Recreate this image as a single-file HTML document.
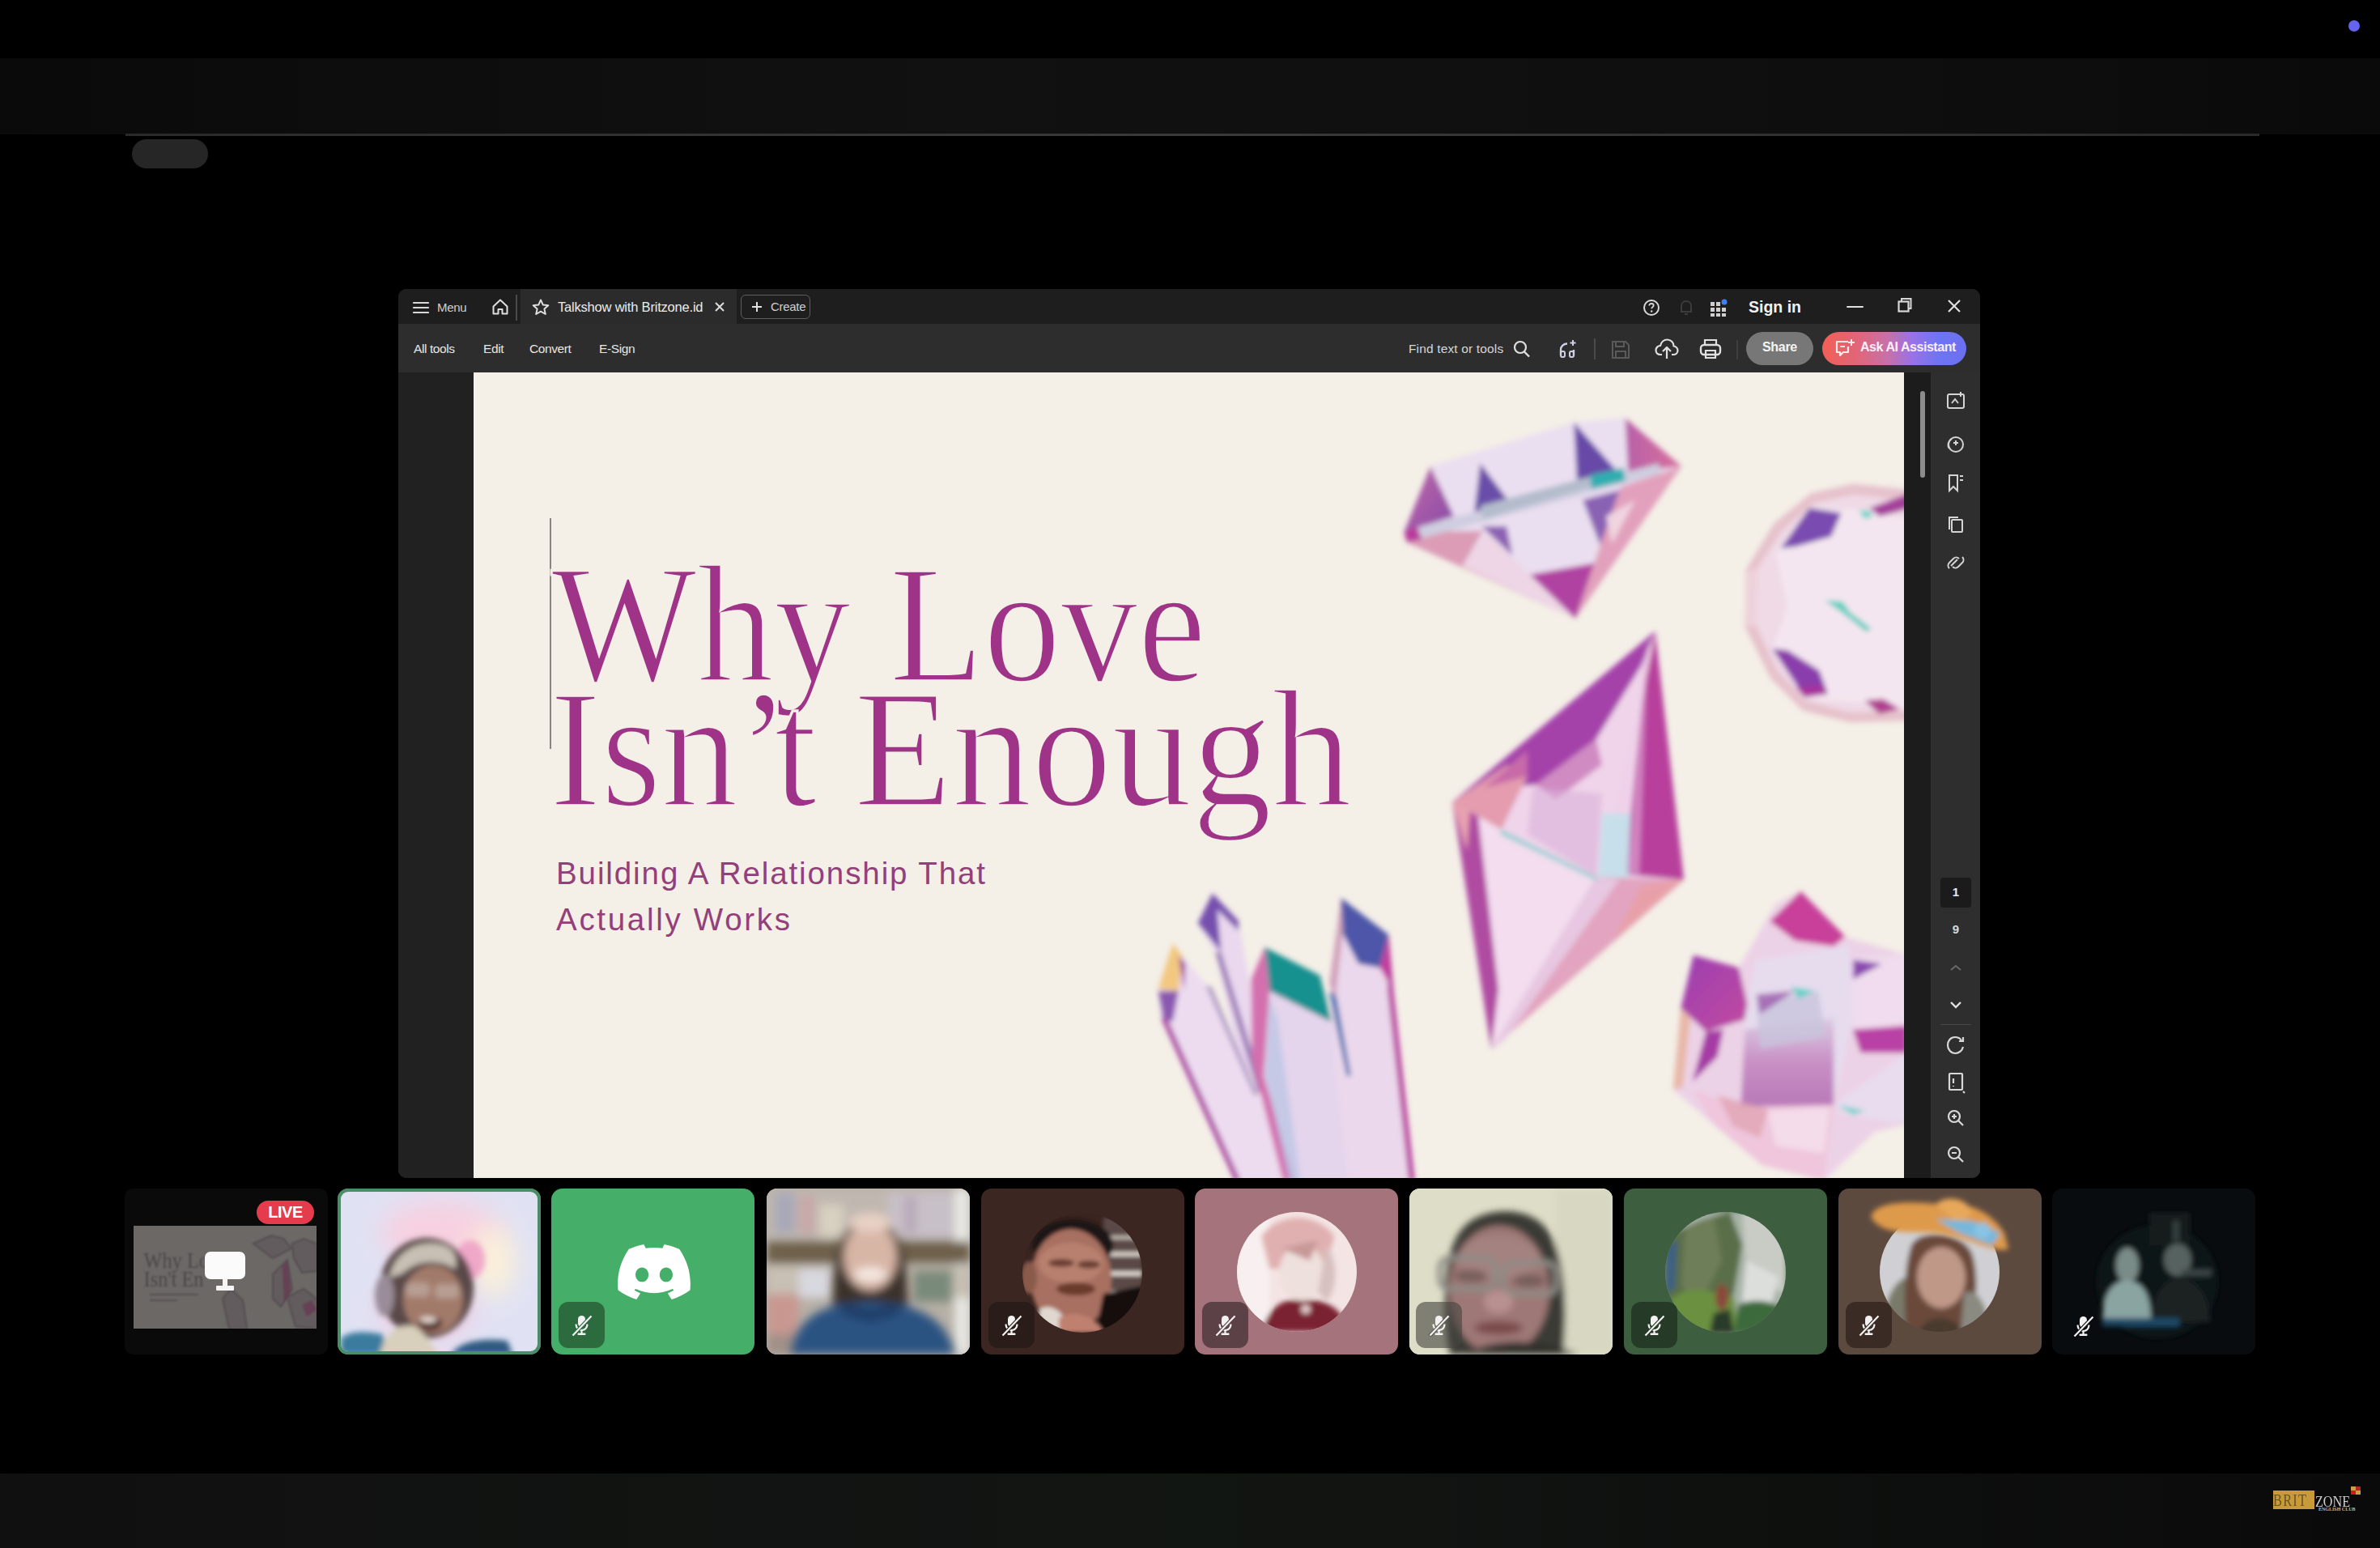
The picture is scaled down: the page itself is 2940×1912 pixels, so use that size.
<!DOCTYPE html>
<html><head><meta charset="utf-8">
<style>
*{margin:0;padding:0;box-sizing:border-box}
html,body{width:2940px;height:1912px;overflow:hidden;background:#000;font-family:"Liberation Sans",sans-serif}
.abs{position:absolute}
#topband{left:0;top:72px;width:2940px;height:94px;background:linear-gradient(90deg,#0a0a0a 0%,#111 40%,#0e0e0e 80%,#0a0a0a 100%)}
#topline{left:155px;top:165px;width:2636px;height:3px;background:linear-gradient(90deg,#2a2a2a,#3a3a3a 50%,#2a2a2a)}
#pill{left:163px;top:172px;width:94px;height:36px;border-radius:18px;background:#262626}
#dot{left:2901px;top:25px;width:14px;height:14px;border-radius:50%;background:#6464ee}
#botband{left:0;top:1820px;width:2940px;height:92px;background:linear-gradient(90deg,#101010,#121613 50%,#0a0a0a)}
#win{left:492px;top:357px;width:1954px;height:1098px;border-radius:10px;background:#2c2c2c;overflow:hidden}
#titlebar{left:0;top:0;width:1954px;height:43px;background:#1e1e1e}
#toolbar{left:0;top:43px;width:1954px;height:60px;background:#2d2d2d}
#lside{left:0;top:103px;width:93px;height:995px;background:#212121}
#slide{left:93px;top:103px;width:1767px;height:995px;background:#f4efe7;overflow:hidden}
#scrollstrip{left:1860px;top:103px;width:33px;height:995px;background:#1c1c1c}
#rpanel{left:1893px;top:103px;width:61px;height:995px;background:#2e2e2e}
.ttl{font-family:"Liberation Serif",serif;font-size:207px;line-height:207px;color:#9e3387;white-space:nowrap;transform-origin:0 0;transform:scaleX(0.92);-webkit-text-stroke:3.5px #f4efe7}
.sub{font-size:38.5px;line-height:40px;color:#93407a;letter-spacing:1.9px;white-space:nowrap}
.tb{color:#e6e6e6;font-size:16px;position:absolute;white-space:nowrap}
</style></head>
<body>
<div id="topband" class="abs"></div>
<div id="topline" class="abs"></div>
<div id="pill" class="abs"></div>
<div id="dot" class="abs"></div>
<div id="botband" class="abs"></div>
<div class="abs" style="left:2808px;top:1841px;width:51px;height:23px;background:#c89a3a"></div>
<div class="abs" style="left:2808px;top:1843px;width:51px;font-family:'Liberation Serif',serif;font-size:20px;line-height:20px;color:#6a5420;letter-spacing:1.5px;transform:scaleX(0.82);transform-origin:0 0;white-space:nowrap">BRIT</div>
<div class="abs" style="left:2860px;top:1845px;font-family:'Liberation Serif',serif;font-size:19px;line-height:19px;color:#d0d0d0;white-space:nowrap;transform:scaleX(0.85);transform-origin:0 0">ZONE</div>
<div class="abs" style="left:2864px;top:1861px;font-family:'Liberation Serif',serif;font-size:6px;line-height:6px;font-weight:bold;color:#bbb;white-space:nowrap">ENGLISH CLUB</div>
<div class="abs" style="left:2904px;top:1836px;width:6px;height:5px;background:#c8a040"></div>
<div class="abs" style="left:2910px;top:1836px;width:6px;height:5px;background:#c02020"></div>
<div class="abs" style="left:2904px;top:1841px;width:6px;height:5px;background:#c02020"></div>
<div class="abs" style="left:2910px;top:1841px;width:6px;height:5px;background:#c8a040"></div>


<div id="win" class="abs">
  <div id="titlebar" class="abs">
    <div class="abs" style="left:151px;top:0;width:267px;height:43px;background:#2b2b2b"></div>
    <div class="abs" style="left:145px;top:7px;width:1.5px;height:32px;background:#4a4a4a"></div>
    <svg class="abs" style="left:18px;top:15px" width="20" height="16" viewBox="0 0 20 16"><path d="M1 2H19M1 8H19M1 14H19" stroke="#d8d8d8" stroke-width="2.2" stroke-linecap="round"/></svg>
    <div class="tb" style="left:48px;top:14px;font-size:15px;color:#cfcfcf;letter-spacing:-0.3px">Menu</div>
    <svg class="abs" style="left:115px;top:11px" width="22" height="22" viewBox="0 0 22 22"><path d="M2.5 10.5L11 2.5L19.5 10.5V19.5H13.5V14H8.5V19.5H2.5Z" fill="none" stroke="#dedede" stroke-width="2" stroke-linejoin="round"/></svg>
    <svg class="abs" style="left:165px;top:12px" width="22" height="21" viewBox="0 0 22 21"><path d="M11 1.5L13.8 7.6L20.3 8.2L15.4 12.6L16.8 19L11 15.7L5.2 19L6.6 12.6L1.7 8.2L8.2 7.6Z" fill="none" stroke="#dedede" stroke-width="2" stroke-linejoin="round"/></svg>
    <div class="tb" style="left:197px;top:13px;font-size:16.5px;color:#ececec;letter-spacing:-0.2px">Talkshow with Britzone.id</div>
    <svg class="abs" style="left:391px;top:16px" width="12" height="12" viewBox="0 0 12 12"><path d="M1 1L11 11M11 1L1 11" stroke="#dcdcdc" stroke-width="2"/></svg>
    <div class="abs" style="left:423px;top:7px;width:86px;height:30px;border:1.5px solid #5e5e5e;border-radius:6px"></div>
    <svg class="abs" style="left:437px;top:16px" width="12" height="12" viewBox="0 0 12 12"><path d="M6 0V12M0 6H12" stroke="#e0e0e0" stroke-width="2"/></svg>
    <div class="tb" style="left:460px;top:13px;font-size:15px;color:#cfcfcf;letter-spacing:-0.3px">Create</div>

    <svg class="abs" style="left:1537px;top:12px" width="22" height="22" viewBox="0 0 22 22"><circle cx="11" cy="11" r="9" fill="none" stroke="#d8d8d8" stroke-width="2"/><path d="M8.3 8.5C8.3 6.9 9.5 6 11 6C12.6 6 13.7 7 13.7 8.3C13.7 10 11.2 10.2 11.2 12.3" fill="none" stroke="#d8d8d8" stroke-width="1.8"/><circle cx="11.2" cy="15.5" r="1.2" fill="#d8d8d8"/></svg>
    <svg class="abs" style="left:1581px;top:12px" width="20" height="22" viewBox="0 0 20 22"><path d="M4 16V9C4 5.5 6.5 3 10 3C13.5 3 16 5.5 16 9V16H4ZM8 19H12" fill="none" stroke="#3c3c3c" stroke-width="2"/></svg>
    <svg class="abs" style="left:1619px;top:11px" width="24" height="24" viewBox="0 0 24 24"><g fill="#cfcfcf"><rect x="2" y="5" width="5" height="5"/><rect x="9" y="5" width="5" height="5"/><rect x="2" y="12" width="5" height="5"/><rect x="9" y="12" width="5" height="5"/><rect x="16" y="12" width="5" height="5"/><rect x="2" y="19" width="5" height="4"/><rect x="9" y="19" width="5" height="4"/><rect x="16" y="19" width="5" height="4"/></g><circle cx="19" cy="5" r="3.5" fill="#3b82f6"/></svg>
    <div class="tb" style="left:1668px;top:11px;font-size:19.5px;font-weight:bold;color:#f2f2f2">Sign in</div>
    <div class="abs" style="left:1789px;top:20.5px;width:21px;height:2.2px;background:#e0e0e0;border-radius:1px"></div>
    <svg class="abs" style="left:1852px;top:10px" width="18" height="20" viewBox="0 0 18 20"><rect x="1.5" y="5.5" width="12" height="12" fill="none" stroke="#d8d8d8" stroke-width="2.2"/><path d="M5 5V2H16.5V14H14" fill="none" stroke="#d8d8d8" stroke-width="2"/></svg>
    <svg class="abs" style="left:1914px;top:13px" width="16" height="16" viewBox="0 0 16 16"><path d="M1 1L15 15M15 1L1 15" stroke="#e0e0e0" stroke-width="2.2"/></svg>
  </div>
  <div id="toolbar" class="abs">
    <div class="tb" style="left:19px;top:22px;font-size:15.5px;letter-spacing:-0.4px">All tools</div>
    <div class="tb" style="left:105px;top:22px;font-size:15.5px;letter-spacing:-0.4px">Edit</div>
    <div class="tb" style="left:162px;top:22px;font-size:15.5px;letter-spacing:-0.4px">Convert</div>
    <div class="tb" style="left:248px;top:22px;font-size:15.5px;letter-spacing:-0.4px">E-Sign</div>
    <div class="tb" style="left:1248px;top:22px;font-size:15.5px;letter-spacing:0.15px;color:#d6d6d6">Find text or tools</div>
    <svg class="abs" style="left:1377px;top:19px" width="22" height="24" viewBox="0 0 22 24"><circle cx="9" cy="10" r="7" fill="none" stroke="#e0e0e0" stroke-width="2.2"/><path d="M14 15.5L20 21.5" stroke="#e0e0e0" stroke-width="2.4"/></svg>
    <svg class="abs" style="left:1433px;top:18px" width="24" height="26" viewBox="0 0 24 26"><path d="M3 21V14C3 9.5 6.5 6.5 11 6.5M19 21V14" fill="none" stroke="#cfcfe6" stroke-width="2.4"/><rect x="3" y="16" width="5" height="7" rx="2" fill="none" stroke="#cfcfe6" stroke-width="2"/><rect x="14" y="16" width="5" height="7" rx="2" fill="none" stroke="#cfcfe6" stroke-width="2"/><path d="M18 2V9M14.5 5.5H21.5" stroke="#cfcfe6" stroke-width="2"/></svg>
    <div class="abs" style="left:1477px;top:18px;width:1.5px;height:26px;background:#4a4a4a"></div>
    <svg class="abs" style="left:1498px;top:20px" width="24" height="24" viewBox="0 0 24 24"><path d="M2 2H18L22 6V22H2Z M6 2V8H16V2 M6 22V14H18V22" fill="none" stroke="#5a5a5a" stroke-width="2"/></svg>
    <svg class="abs" style="left:1552px;top:17px" width="30" height="28" viewBox="0 0 30 28"><path d="M9 21H7C3.5 21 1.5 18.5 1.5 15.5C1.5 12.5 4 10 7 10C8 5.5 11.5 2.5 15.5 2.5C20 2.5 23.5 6 23.5 10.5C26.5 11 28.5 13.5 28.5 16C28.5 19 26 21 23 21H21M15 26V12M10 17L15 12L20 17" fill="none" stroke="#e0e0e0" stroke-width="2.2" stroke-linejoin="round"/></svg>
    <svg class="abs" style="left:1607px;top:18px" width="28" height="26" viewBox="0 0 28 26"><rect x="2" y="8" width="24" height="12" rx="4" fill="none" stroke="#e0e0e0" stroke-width="2.4"/><path d="M7 8V2H21V8M8 15H20V24H8Z" fill="none" stroke="#e0e0e0" stroke-width="2.2"/></svg>
    <div class="abs" style="left:1653px;top:20px;width:1.5px;height:24px;background:#3e3e3e"></div>
    <div class="abs" style="left:1665px;top:10px;width:83px;height:41px;border-radius:21px;background:#777"></div>
    <div class="tb" style="left:1665px;top:20px;width:83px;text-align:center;font-size:16px;font-weight:bold;color:#f4f4f4;letter-spacing:-0.3px">Share</div>
    <div class="abs" style="left:1759px;top:10px;width:178px;height:41px;border-radius:21px;background:linear-gradient(90deg,#f25f55 0%,#e0667a 25%,#c870a8 45%,#9a72e6 62%,#6f74f4 80%,#6a70f0 100%)"></div>
    <svg class="abs" style="left:1774px;top:18px" width="26" height="24" viewBox="0 0 26 24"><path d="M17 4H3V17H7V21L11 17H17V10" fill="none" stroke="#ffe8e8" stroke-width="2.2" stroke-linejoin="round"/><path d="M21 1V9M17 5H25" stroke="#ffe8e8" stroke-width="2"/><path d="M7 10H13" stroke="#ffe8e8" stroke-width="2"/></svg>
    <div class="tb" style="left:1806px;top:20px;font-size:16px;font-weight:bold;color:#fbeefa;letter-spacing:-0.45px">Ask AI Assistant</div>
  </div>
  <div id="lside" class="abs"></div>
  <div id="slide" class="abs">
<svg class="abs" style="left:0;top:0" width="1767" height="995" viewBox="585 460 1767 995">
<defs>
<filter id="bl" x="-5%" y="-5%" width="110%" height="110%"><feGaussianBlur stdDeviation="1.6"/></filter>
<filter id="bl3" x="-5%" y="-5%" width="110%" height="110%"><feGaussianBlur stdDeviation="3"/></filter>
<filter id="bl2" x="-10%" y="-10%" width="120%" height="120%"><feGaussianBlur stdDeviation="6"/></filter>
<linearGradient id="dA" x1="0" y1="0" x2="1" y2="1"><stop offset="0" stop-color="#c06aa8"/><stop offset="1" stop-color="#8a4aa8"/></linearGradient>
<linearGradient id="dR" x1="0" y1="0" x2="1" y2="0"><stop offset="0" stop-color="#b860a8"/><stop offset="1" stop-color="#d8709c"/></linearGradient>
<linearGradient id="rkC" x1="0" y1="0" x2="0" y2="1"><stop offset="0" stop-color="#dccce4"/><stop offset="0.5" stop-color="#c890c4"/><stop offset="1" stop-color="#b878b8"/></linearGradient>
<linearGradient id="lav" x1="0" y1="0" x2="1" y2="1"><stop offset="0" stop-color="#ede3f2"/><stop offset="1" stop-color="#e3d3ea"/></linearGradient>
<linearGradient id="pinkbody" x1="0" y1="0" x2="0" y2="1"><stop offset="0" stop-color="#f4dcee"/><stop offset="1" stop-color="#ecc6dc"/></linearGradient>
<linearGradient id="mag1" x1="0" y1="0" x2="1" y2="1"><stop offset="0" stop-color="#9b3fb0"/><stop offset="1" stop-color="#c24aa0"/></linearGradient>
<linearGradient id="salmon" x1="0" y1="0" x2="1" y2="1"><stop offset="0" stop-color="#e6a0b4"/><stop offset="1" stop-color="#d77fae"/></linearGradient>
<linearGradient id="pr1" x1="0" y1="0" x2="1" y2="1"><stop offset="0" stop-color="#a53fae"/><stop offset="0.45" stop-color="#c05aac"/><stop offset="1" stop-color="#e9a2b6"/></linearGradient>
<linearGradient id="pr2" x1="0" y1="0" x2="1" y2="0"><stop offset="0" stop-color="#e8cfe8"/><stop offset="0.5" stop-color="#b64aa6"/><stop offset="1" stop-color="#c4479c"/></linearGradient>
<linearGradient id="pr3" x1="0" y1="0" x2="1" y2="0"><stop offset="0" stop-color="#b24aa4"/><stop offset="0.25" stop-color="#f0d6ee"/><stop offset="1" stop-color="#f2dcf0"/></linearGradient>
<linearGradient id="pr4" x1="0" y1="0" x2="1" y2="1"><stop offset="0" stop-color="#d59ac8"/><stop offset="1" stop-color="#e79ca8"/></linearGradient>
</defs>

<!-- Diamond top: zoom frame 1720,500 scale .18083 -->
<g filter="url(#bl3)"><g transform="translate(1720,500) scale(0.18083)">
  <polygon points="80,870 260,420 1240,120 1590,90 1975,420 1250,1460 100,940" fill="#eadff0"/>
  <polygon points="80,870 260,420 420,760" fill="url(#dA)"/>
  <polygon points="600,400 560,730 820,690" fill="#6a4ea8"/>
  <polygon points="1240,120 1260,510 1550,470" fill="#6848a8"/>
  <polygon points="1590,90 1975,420 1800,440 1610,470" fill="url(#dR)"/>
  <polygon points="100,940 80,870 620,860 480,1100 1250,1460" fill="#dc9cb6"/>
  <polygon points="480,1100 640,870 1250,1460" fill="#eed6e6"/>
  <polygon points="610,830 820,1030 780,830" fill="#8c60b2"/>
  <polygon points="1300,650 1560,580 1420,960" fill="#8a62b4"/>
  <polygon points="940,1160 1390,1080 1250,1460" fill="#b042a2"/>
  <polygon points="1560,560 1975,420 1250,1460 1420,960" fill="#e2a0bc"/>
  <polygon points="1460,760 1660,650 1500,950" fill="#f0d4e0"/>
  <polygon points="150,840 1820,400 1830,470 170,920" fill="#cfcde0"/>
  <polygon points="600,690 1350,490 1360,560 620,780" fill="#b4bccc"/>
  <polygon points="1350,480 1580,430 1590,520 1360,575" fill="#2eaeb0"/>
  <polygon points="80,870 170,830 200,920 100,940" fill="#b83a9c"/>
</g></g>

<!-- Round diamond right: zoom frame 2140,580 scale .20678 -->
<g filter="url(#bl3)"><g transform="translate(2140,580) scale(0.20678)">
  <polygon points="80,600 250,320 470,140 720,85 1060,120 1060,1500 700,1510 420,1440 230,1250 75,940" fill="#e6c2cc"/>
  <polygon points="150,590 300,360 490,200 730,150 1060,190 1060,1440 700,1450 440,1380 270,1200 140,930" fill="#efdae6"/>
  <polygon points="260,500 460,230 800,240 1060,300 1060,1430 760,1390 420,1370 240,1070 330,820" fill="#f4e6f0"/>
  <polygon points="290,470 460,230 650,260 590,400 380,460" fill="#7a4cb0"/>
  <polygon points="240,1070 430,1360 570,1340 520,1200 330,1080" fill="#8a3cac"/>
  <polygon points="380,1300 430,1360 560,1340 540,1290" fill="#a8309c"/>
  <polygon points="820,230 1060,140 1060,230 880,280" fill="#a4409c"/>
  <polygon points="790,1380 880,1460 1000,1430 900,1370" fill="#b04090"/>
  <polygon points="550,780 660,790 700,850 830,950 800,970 650,850" fill="#5ccec0"/>
  <polygon points="760,240 830,250 830,290 780,290" fill="#70d4c8"/>
  <polygon points="80,610 150,590 140,930 75,940" fill="#eed2da"/>
</g></g>

<!-- Pyramid crystal: zoom frame 1780,760 scale .35516 -->
<g filter="url(#bl3)"><g transform="translate(1780,760) scale(0.35516)">
  <polygon points="745,55 40,650 210,745 540,910" fill="#f0d4ea"/>
  <polygon points="745,55 40,650 150,600 330,590 540,430 700,170" fill="#a442aa"/>
  <polygon points="330,590 540,430 560,520 400,640" fill="#c878b8" opacity=".8"/>
  <polygon points="40,650 230,520 300,560 210,745" fill="#e49cae"/>
  <polygon points="150,600 300,470 300,560" fill="#c86aa8"/>
  <polygon points="320,600 560,620 540,910 300,760" fill="#d8b0d8" opacity=".6"/>
  <polygon points="745,55 540,910 845,920" fill="#efd2ea"/>
  <polygon points="745,55 845,920 640,900 700,300" fill="#b8409c"/>
  <polygon points="700,300 720,60 690,900 650,900" fill="#dca0d0" opacity=".7"/>
  <polygon points="560,690 660,690 650,960 545,930" fill="#bfe2ea" opacity=".85"/>
  <polygon points="40,650 210,745 540,910 175,1510" fill="#f3ddef"/>
  <polygon points="40,650 130,700 200,1300 175,1510" fill="#b04ca2"/>
  <polygon points="40,650 100,680 90,820" fill="#e8a2b0"/>
  <polygon points="540,910 845,920 175,1510" fill="#e2a4c0"/>
  <polygon points="540,910 620,920 220,1480 175,1510" fill="#e8cfe8" opacity=".8"/>
  <polygon points="700,940 845,920 600,1130" fill="#e8a0a8"/>
  <polygon points="210,745 540,910 545,925 205,760" fill="#8ccfd0"/>
</g></g>

<!-- Cluster bottom-left: zoom frame 1420,1090 scale .23912 -->
<g filter="url(#bl3)"><g transform="translate(1420,1090) scale(0.23912)">
  <!-- crystal 2 back -->
  <polygon points="250,210 325,55 460,200 470,260 640,1150 460,900 340,360" fill="#ead8ee"/>
  <polygon points="250,210 325,55 460,200 460,250 350,140 370,360" fill="#7650ae"/>
  <polygon points="340,360 370,360 600,1100 560,1080" fill="#9a7ab8"/>
  <!-- crystal 1 -->
  <polygon points="45,550 120,315 300,540 780,1540 450,1540 60,700" fill="#eddcf0"/>
  <polygon points="45,550 120,315 170,380 150,560" fill="#f2c880"/>
  <polygon points="45,560 150,560 120,720 70,700" fill="#8a58b0"/>
  <polygon points="60,700 90,700 470,1540 440,1540" fill="#a83aa0"/>
  <polygon points="150,380 185,420 180,560" fill="#9a3a9a"/>
  <polygon points="290,530 320,540 560,1100 540,1100" fill="#9880b8" opacity=".8"/>
  <!-- crystal 3 teal -->
  <polygon points="525,500 595,335 880,480 940,720 1160,1540 720,1540 530,900" fill="#e4d4ec"/>
  <polygon points="595,335 880,480 940,720 620,560" fill="#13918f"/>
  <polygon points="525,500 595,335 620,560 590,1000 750,1540 690,1540 530,920" fill="#d46fae"/>
  <polygon points="620,600 660,700 780,1540 720,1540 600,1000" fill="#b8c4e4" opacity=".7"/>
  <!-- crystal 4 blue -->
  <polygon points="930,520 990,80 1235,270 1260,560 1370,1540 1030,1540 960,1000" fill="#ebd8ec"/>
  <polygon points="990,80 1235,270 1190,440 1080,420 980,230" fill="#4d56a8"/>
  <polygon points="1190,440 1235,270 1260,560" fill="#c53c9c"/>
  <polygon points="1235,270 1260,560 1370,1540 1340,1540 1230,560" fill="#b8389c"/>
  <polygon points="930,570 960,560 1040,1000 1020,1000" fill="#3e6cb0"/>
  <polygon points="930,520 990,80 1000,240 960,600" fill="#d0a0b8"/>
</g></g>

<!-- Rock cluster bottom-right: zoom frame 2050,1090 scale .239 -->
<g filter="url(#bl3)"><g transform="translate(2050,1090) scale(0.239)">
  <polygon points="70,1070 110,650 175,375 410,440 600,110 730,45 960,280 1280,375 1280,1250 1110,1290 850,1540 530,1460 280,1250" fill="#ecd2e6"/>
  <polygon points="570,200 730,45 960,280 900,330 700,300" fill="#c8409a"/>
  <polygon points="110,650 175,375 410,440 470,700 240,770" fill="url(#mag1)"/>
  <polygon points="170,1030 240,770 330,760 300,900" fill="#a63aa5"/>
  <polygon points="500,400 980,330 1000,700 900,1150 420,1160 440,700" fill="#e6dcee"/>
  <polygon points="440,760 900,700 900,1150 420,1160" fill="url(#rkC)"/>
  <polygon points="500,620 820,560 860,800 520,860" fill="#c8c4dc" opacity=".8"/>
  <polygon points="500,580 700,560 520,680" fill="#9a5aaa" opacity=".8"/>
  <polygon points="990,390 1280,375 1280,750 1000,750" fill="#f0dcee"/>
  <polygon points="1000,400 1150,420 1000,500" fill="#8a4ab0"/>
  <polygon points="1000,760 1280,740 1280,880 1040,880" fill="#b93fa5"/>
  <polygon points="900,1150 1280,880 1280,1250 950,1200" fill="#e8dcee"/>
  <polygon points="170,1070 420,1160 900,1150 850,1540 530,1460 280,1250" fill="#efc6dc"/>
  <polygon points="70,1070 110,650 160,700 120,1060" fill="#e8b8a8"/>
  <polygon points="680,540 800,560 720,600" fill="#5fd0c8"/>
  <polygon points="920,1150 1060,1180 1000,1200" fill="#60d0c8"/>
  <polygon points="300,1100 560,1170 520,1320 380,1260" fill="#e0a4b4" opacity=".8"/>
  <polygon points="560,1180 880,1160 850,1400 600,1360" fill="#f4dcea"/>
</g></g>
</svg>

    <div class="abs" style="left:94px;top:180px;width:2px;height:285px;background:#8a8580"></div>
    <div class="abs ttl" style="left:96px;top:208px">Why Love</div>
    <div class="abs ttl" style="left:94px;top:362px">Isn<span style="margin-right:-0.1em">’</span>t</div>
    <div class="abs ttl" style="left:470px;top:362px;transform:scaleX(0.955)">Enough</div>
    <div class="abs sub" style="left:102px;top:599px">Building A Relationship That</div>
    <div class="abs sub" style="left:102px;top:656px;letter-spacing:2.7px">Actually Works</div>
  </div>
  <div id="scrollstrip" class="abs"><div class="abs" style="left:20px;top:23px;width:6px;height:107px;border-radius:3px;background:#8c8c8c"></div></div>
  <div id="rpanel" class="abs">
    <svg class="abs" style="left:11px;top:24px" width="40" height="700" viewBox="0 0 40 700" fill="none" stroke="#d4d4d4" stroke-width="2">
      <!-- y relative: page 495 -> rel 495-460-24=11 -->
      <rect x="10" y="3" width="20" height="17" rx="2"/><path d="M15 14L19 9L23 14" /><path d="M26 0V6M23 3H29"/>
      <circle cx="20" cy="65" r="9"/><path d="M12 70C9 66 11 60 15 58"/><path d="M17 63H23M20 60V66"/>
      <path d="M12 103V122L17 117L22 122V103Z"/><path d="M25 104H29M25 109H29"/>
      <rect x="15" y="158" width="13" height="15" rx="1"/><path d="M12 170V155H23"/>
      <path d="M14 215L22 207M12 218C10 216 10 213 12 211L17 206C19 204 22 204 24 206M28 204C30 206 30 209 28 211L23 216C21 218 18 218 16 216"/>
    </svg>
    <div class="abs" style="left:12px;top:624px;width:38px;height:37px;border-radius:4px;background:#1b1b1b"></div>
    <div class="abs" style="left:12px;top:633px;width:38px;text-align:center;font-size:15px;font-weight:bold;color:#e8e8e8">1</div>
    <div class="abs" style="left:12px;top:679px;width:38px;text-align:center;font-size:15px;font-weight:bold;color:#d8d8d8">9</div>
    <svg class="abs" style="left:22px;top:730px" width="18" height="10" viewBox="0 0 18 10"><path d="M3 8L9 3L15 8" fill="none" stroke="#6a6a6a" stroke-width="2"/></svg>
    <svg class="abs" style="left:22px;top:776px" width="18" height="10" viewBox="0 0 18 10"><path d="M3 2L9 8L15 2" fill="none" stroke="#e0e0e0" stroke-width="2.4"/></svg>
    <div class="abs" style="left:12px;top:805px;width:38px;height:1px;background:#484848"></div>
    <svg class="abs" style="left:11px;top:818px" width="40" height="200" viewBox="0 0 40 200" fill="none" stroke="#d8d8d8" stroke-width="2.2">
      <path d="M27 7C25 4 22 3 19 3C13.5 3 10 7.5 10 13C10 18.5 14 23 19.5 23C24 23 28 19.5 29 15"/><path d="M24 8H29V3" />
      <rect x="12" y="48" width="16" height="20" rx="1"/><path d="M17 60V54M17 63V64M29 70L31 72"/>
      <circle cx="18" cy="101" r="7"/><path d="M23 106L29 112M15 101H21M18 98V104"/>
      <circle cx="18" cy="146" r="7"/><path d="M23 151L29 157M15 146H21"/>
    </svg>
  </div>
</div>

<!--TILES-->
<div class="abs tile" style="left:154px;top:1468px;width:251px;height:205px;background:#0a0a0a;border-radius:10px"><div class="abs" style="left:11px;top:46px;width:226px;height:127px;background:#6b6866;overflow:hidden">
<svg width="226" height="127" viewBox="0 0 226 127" style="filter:blur(1px)">
<text x="14" y="52" font-family="Liberation Serif" font-size="27" fill="#4e4848" transform="scale(0.9,1)">Why Lo</text>
<text x="14" y="75" font-family="Liberation Serif" font-size="27" fill="#4e4848" transform="scale(0.9,1)">Isn't En</text>
<rect x="20" y="84" width="60" height="2" fill="#5a5252"/><rect x="20" y="91" width="34" height="2" fill="#5a5252"/>
<g fill="#5a4e56" opacity=".45" stroke="#3e3038" stroke-width="2">
<polygon points="148,22 170,12 185,16 195,28 172,40"/>
<polygon points="196,22 210,16 226,22 226,56 208,58 198,40"/>
<polygon points="172,60 190,42 196,78 182,100 172,90"/>
<polygon points="110,90 120,78 135,92 140,127 118,127"/>
<polygon points="190,88 210,78 226,90 226,127 200,124"/>
</g>
<g fill="#6a2e4e" opacity=".6"><polygon points="184,50 190,44 194,80 186,96"/><polygon points="208,98 220,92 226,104 214,112"/></g>
</svg></div>
<div class="abs" style="left:99px;top:78px;width:50px;height:34px;border-radius:7px;background:#fbfbfb"></div>
<div class="abs" style="left:121px;top:111px;width:6px;height:10px;background:#f5f5f5"></div>
<div class="abs" style="left:113px;top:120px;width:22px;height:6px;border-radius:1px;background:#f5f5f5"></div>
<div class="abs" style="left:163px;top:15px;width:71px;height:29px;border-radius:15px;background:#e43c4c"></div>
<div class="abs" style="left:163px;top:18px;width:71px;text-align:center;font-size:20px;font-weight:bold;color:#fff;letter-spacing:-0.5px">LIVE</div></div>
<div class="abs tile" style="left:417px;top:1468px;width:251px;height:205px;background:#4b8d68;border-radius:13px"><div class="abs" style="left:0;top:0;width:251px;height:205px;border-radius:13px;border:4px solid #4b8d68;overflow:hidden">
<svg width="243" height="197" viewBox="4 4 243 197">
<defs><filter id="b2" x="-50%" y="-50%" width="200%" height="200%"><feGaussianBlur stdDeviation="16"/></filter>
<filter id="b2s" x="-50%" y="-50%" width="200%" height="200%"><feGaussianBlur stdDeviation="3.5"/></filter></defs>
<rect x="0" y="0" width="251" height="205" fill="#e0e2f4"/>
<ellipse cx="128" cy="55" rx="75" ry="40" fill="#f8d0e0" filter="url(#b2)"/>
<ellipse cx="192" cy="90" rx="28" ry="45" fill="#fcf0d8" filter="url(#b2)"/>
<ellipse cx="110" cy="150" rx="60" ry="40" fill="#f0d0e4" filter="url(#b2)"/>
<g filter="url(#b2s)">
<ellipse cx="164" cy="88" rx="18" ry="24" fill="#f0a8c8"/>
<ellipse cx="110" cy="123" rx="58" ry="62" fill="#5a4a48"/>
<ellipse cx="58" cy="132" rx="12" ry="26" fill="#9a8c98"/>
<path d="M64 110C70 80 95 66 120 68C140 70 150 80 145 100C130 88 100 86 80 105Z" fill="#c8c0b4"/>
<ellipse cx="118" cy="137" rx="37" ry="42" fill="#a27a6a"/>
<rect x="84" y="116" width="30" height="18" rx="6" fill="#c0aca4" opacity=".7"/>
<rect x="120" y="118" width="30" height="18" rx="6" fill="#c0aca4" opacity=".7"/>
<ellipse cx="114" cy="166" rx="15" ry="9" fill="#4a2424"/>
<ellipse cx="112" cy="162" rx="11" ry="4" fill="#e8d8d0"/>
<path d="M4 205V185C15 175 35 176 56 180L60 205Z" fill="#3a7c9e"/>
<path d="M52 205C58 178 75 166 95 170C110 180 118 195 124 205Z" fill="#d8d0bc"/>
<path d="M140 205C150 190 175 184 210 188L216 205Z" fill="#2d5a80"/>
</g>
</svg></div></div>
<div class="abs tile" style="left:681px;top:1468px;width:251px;height:205px;background:#45ae68;border-radius:14px"><svg class="abs" style="left:82px;top:69px" width="90" height="68" viewBox="0 0 127.14 96.36"><path fill="#fff" d="M107.7,8.07A105.15,105.15,0,0,0,81.47,0a72.06,72.06,0,0,0-3.36,6.83A97.68,97.68,0,0,0,49,6.83,72.37,72.37,0,0,0,45.64,0,105.89,105.89,0,0,0,19.39,8.09C2.790,32.65-1.71,56.6.54,80.21h0A105.73,105.73,0,0,0,32.71,96.36,77.7,77.7,0,0,0,39.6,85.25a68.42,68.42,0,0,1-10.85-5.18c.91-.66,1.8-1.34,2.66-2a75.57,75.57,0,0,0,64.32,0c.87.71,1.76,1.39,2.66,2a68.68,68.68,0,0,1-10.87,5.19,77,77,0,0,0,6.89,11.1A105.25,105.25,0,0,0,126.6,80.22h0C129.24,52.84,122.09,29.11,107.7,8.07ZM42.45,65.69C36.18,65.690,31,60,31,53s5-12.740,11.43-12.74S54,46,53.89,53,48.84,65.69,42.45,65.69Zm42.24,0C78.41,65.69,73.25,60,73.25,53s5-12.74,11.44-12.74S96.23,46,96.12,53,91.08,65.69,84.69,65.690Z"/></svg><div class="abs" style="left:9px;top:140px;width:57px;height:57px;border-radius:12px;background:#2b6b3e"></div><svg class="abs" style="left:23px;top:154px" width="30" height="30" viewBox="0 0 30 30"><g fill="#f2f2f2"><rect x="10" y="3" width="9" height="14" rx="4.5"/><path d="M6.5 13.5C6.5 19 10 22 14.5 22C19 22 22.5 19 22.5 13.5H20.3C20.3 17.5 17.8 19.8 14.5 19.8C11.2 19.8 8.7 17.5 8.7 13.5Z"/><rect x="13.4" y="21" width="2.2" height="4"/><rect x="9.5" y="24.5" width="10" height="2.6" rx="1"/></g><path d="M3 28L27 3" stroke="#2b6b3e" stroke-width="4.5"/><path d="M3.5 27.5L26.5 3.5" stroke="#f2f2f2" stroke-width="2.2"/></svg></div>
<div class="abs tile" style="left:947px;top:1468px;width:251px;height:205px;background:#b8b0a6;border-radius:13px;overflow:hidden"><svg width="251" height="205" viewBox="0 0 251 205">
<defs><filter id="b4" x="-50%" y="-50%" width="200%" height="200%"><feGaussianBlur stdDeviation="6"/></filter></defs>
<rect width="251" height="205" fill="#b8b0a6"/>
<g filter="url(#b4)">
<rect x="0" y="0" width="251" height="60" fill="#c0b8b0"/>
<rect x="10" y="5" width="25" height="50" fill="#a8a8b8"/><rect x="40" y="8" width="20" height="48" fill="#c8a8a8"/><rect x="65" y="20" width="30" height="40" fill="#d8d0c0"/>
<rect x="150" y="5" width="80" height="55" fill="#c8c0c8"/><rect x="170" y="10" width="15" height="45" fill="#b8a8b8"/>
<rect x="232" y="0" width="19" height="205" fill="#e8e8e4"/>
<rect x="0" y="65" width="251" height="28" fill="#6e604c"/>
<rect x="0" y="95" width="251" height="40" fill="#c8c0b4"/>
<rect x="40" y="100" width="40" height="35" fill="#d8d8e0"/>
<rect x="180" y="100" width="50" height="40" fill="#7a8a7a"/>
<rect x="0" y="130" width="40" height="50" fill="#c89890"/>
<rect x="0" y="180" width="40" height="25" fill="#a09088"/>
</g>
<g filter="url(#b4)">
<path d="M82 150C80 90 90 40 128 36C166 40 176 90 174 150Z" fill="#3a302c"/>
<ellipse cx="128" cy="84" rx="33" ry="42" fill="#d8b6a6"/>
<ellipse cx="128" cy="42" rx="26" ry="12" fill="#e8d0c4"/>
<ellipse cx="128" cy="106" rx="20" ry="9" fill="#f4e8e0"/>
<path d="M30 205C35 160 70 140 128 140C190 140 225 165 232 205Z" fill="#2a5282"/>
<path d="M95 140L128 150L160 140L165 155L128 165L92 155Z" fill="#1e3e68"/>
</g>
</svg></div>
<div class="abs tile" style="left:1212px;top:1468px;width:251px;height:205px;background:#3b2622;border-radius:13px"><svg class="abs" style="left:51px;top:30px" width="148" height="148" viewBox="0 0 148 148">
<defs><clipPath id="c5"><circle cx="74" cy="74" r="74"/></clipPath><filter id="b5" x="-20%" y="-20%" width="140%" height="140%"><feGaussianBlur stdDeviation="2.5"/></filter></defs>
<g clip-path="url(#c5)"><rect width="148" height="148" fill="#3a2420"/>
<g filter="url(#b5)">
<rect x="100" y="5" width="48" height="120" fill="#5a4a46"/>
<rect x="104" y="28" width="44" height="5" fill="#b8b0a8"/><rect x="104" y="48" width="44" height="6" fill="#d0c8c0"/><rect x="104" y="72" width="44" height="6" fill="#d8d0c8"/><rect x="100" y="96" width="48" height="6" fill="#c0b8b0"/>
<ellipse cx="62" cy="40" rx="50" ry="32" fill="#1e1412"/>
<ellipse cx="60" cy="82" rx="50" ry="62" fill="#a87060"/>
<ellipse cx="60" cy="62" rx="40" ry="25" fill="#b8806e"/>
<ellipse cx="48" cy="62" rx="16" ry="5" fill="#6a4034"/><ellipse cx="82" cy="64" rx="14" ry="5" fill="#6a4034"/>
<ellipse cx="66" cy="94" rx="24" ry="8" fill="#6a3a2c"/>
<ellipse cx="8" cy="80" rx="10" ry="20" fill="#8a5a4c"/>
<path d="M100 100L148 90V148H90Z" fill="#120c0a"/>
<path d="M20 120C30 112 50 115 60 148H20Z" fill="#e0d8d0"/>
<path d="M45 130C60 120 90 125 100 148H45Z" fill="#c08070"/>
</g></g></svg><div class="abs" style="left:9px;top:140px;width:57px;height:57px;border-radius:12px;background:#2a1c18"></div><svg class="abs" style="left:23px;top:154px" width="30" height="30" viewBox="0 0 30 30"><g fill="#f2f2f2"><rect x="10" y="3" width="9" height="14" rx="4.5"/><path d="M6.5 13.5C6.5 19 10 22 14.5 22C19 22 22.5 19 22.5 13.5H20.3C20.3 17.5 17.8 19.8 14.5 19.8C11.2 19.8 8.7 17.5 8.7 13.5Z"/><rect x="13.4" y="21" width="2.2" height="4"/><rect x="9.5" y="24.5" width="10" height="2.6" rx="1"/></g><path d="M3 28L27 3" stroke="#2a1c18" stroke-width="4.5"/><path d="M3.5 27.5L26.5 3.5" stroke="#f2f2f2" stroke-width="2.2"/></svg></div>
<div class="abs tile" style="left:1476px;top:1468px;width:251px;height:205px;background:#a5737b;border-radius:13px"><svg class="abs" style="left:52px;top:29px" width="148" height="148" viewBox="0 0 148 148">
<defs><clipPath id="c6"><circle cx="74" cy="74" r="74"/></clipPath><filter id="b6"><feGaussianBlur stdDeviation="3"/></filter></defs>
<g clip-path="url(#c6)"><rect width="148" height="148" fill="#f4e4e4"/>
<g filter="url(#b6)">
<rect x="0" y="0" width="40" height="148" fill="#f8f0f0"/>
<path d="M30 30C50 0 100 0 120 30L110 70L40 70Z" fill="#e0b0b0"/>
<ellipse cx="80" cy="75" rx="28" ry="35" fill="#eee0dc"/>
<path d="M55 45L100 35L90 60Z" fill="#c89898"/>
<path d="M110 40C125 60 125 90 112 110L100 100Z" fill="#d8c0c0"/>
<path d="M30 148C40 115 60 105 80 110C110 105 130 120 140 148Z" fill="#7a2430"/>
<circle cx="85" cy="120" r="6" fill="#e0c8c8"/>
</g></g></svg><div class="abs" style="left:9px;top:140px;width:57px;height:57px;border-radius:12px;background:#5c4246"></div><svg class="abs" style="left:23px;top:154px" width="30" height="30" viewBox="0 0 30 30"><g fill="#f2f2f2"><rect x="10" y="3" width="9" height="14" rx="4.5"/><path d="M6.5 13.5C6.5 19 10 22 14.5 22C19 22 22.5 19 22.5 13.5H20.3C20.3 17.5 17.8 19.8 14.5 19.8C11.2 19.8 8.7 17.5 8.7 13.5Z"/><rect x="13.4" y="21" width="2.2" height="4"/><rect x="9.5" y="24.5" width="10" height="2.6" rx="1"/></g><path d="M3 28L27 3" stroke="#5c4246" stroke-width="4.5"/><path d="M3.5 27.5L26.5 3.5" stroke="#f2f2f2" stroke-width="2.2"/></svg></div>
<div class="abs tile" style="left:1741px;top:1468px;width:251px;height:205px;background:#dedec8;border-radius:13px;overflow:hidden"><svg width="251" height="205" viewBox="0 0 251 205">
<defs><filter id="b7" x="-50%" y="-50%" width="200%" height="200%"><feGaussianBlur stdDeviation="4"/></filter></defs>
<rect width="251" height="205" fill="#dedec8"/>
<g filter="url(#b7)">
<rect x="180" y="0" width="71" height="205" fill="#d8d8c2"/>
<path d="M50 205C40 150 40 70 70 45C90 25 140 20 165 45C195 75 195 150 190 205Z" fill="#3a3a36"/>
<ellipse cx="111" cy="126" rx="62" ry="80" fill="#9e7876"/>
<ellipse cx="110" cy="85" rx="50" ry="26" fill="#a48280"/>
<rect x="38" y="86" width="68" height="38" rx="12" fill="none" stroke="#8e8c86" stroke-width="7"/>
<rect x="116" y="92" width="66" height="38" rx="12" fill="none" stroke="#8e8c86" stroke-width="7"/>
<ellipse cx="76" cy="108" rx="20" ry="8" fill="#6e5856" opacity=".8"/>
<ellipse cx="148" cy="114" rx="20" ry="8" fill="#6e5856" opacity=".8"/>
<ellipse cx="110" cy="140" rx="18" ry="14" fill="#b89090"/>
<ellipse cx="110" cy="172" rx="30" ry="8" fill="#7a4848"/>
<path d="M70 205C90 190 150 180 210 205Z" fill="#2e2e2c"/>
</g>
</svg>
<div class="abs" style="left:8px;top:140px;width:57px;height:57px;border-radius:12px;background:rgba(70,70,64,.62)"></div><svg class="abs" style="left:22px;top:154px" width="30" height="30" viewBox="0 0 30 30"><g fill="#f2f2f2"><rect x="10" y="3" width="9" height="14" rx="4.5"/><path d="M6.5 13.5C6.5 19 10 22 14.5 22C19 22 22.5 19 22.5 13.5H20.3C20.3 17.5 17.8 19.8 14.5 19.8C11.2 19.8 8.7 17.5 8.7 13.5Z"/><rect x="13.4" y="21" width="2.2" height="4"/><rect x="9.5" y="24.5" width="10" height="2.6" rx="1"/></g><path d="M3 28L27 3" stroke="#5a5850" stroke-width="4.5"/><path d="M3.5 27.5L26.5 3.5" stroke="#f2f2f2" stroke-width="2.2"/></svg></div>
<div class="abs tile" style="left:2006px;top:1468px;width:251px;height:205px;background:#3e5e40;border-radius:13px"><svg class="abs" style="left:51px;top:29px" width="149" height="149" viewBox="0 0 149 149">
<defs><clipPath id="c8"><circle cx="74.5" cy="74.5" r="74.5"/></clipPath><filter id="b8" x="-20%" y="-20%" width="140%" height="140%"><feGaussianBlur stdDeviation="3"/></filter></defs>
<g clip-path="url(#c8)"><rect width="149" height="149" fill="#7a8a70"/>
<g filter="url(#b8)">
<rect x="0" y="0" width="149" height="149" fill="#a8b4a8"/>
<path d="M0 30L45 10L80 0L95 40L85 100L60 149H0Z" fill="#5a6e4a"/>
<path d="M25 20L60 5L70 60L40 120L20 90Z" fill="#6e7e58"/>
<path d="M0 40L15 35L12 95L0 100Z" fill="#3e6080"/>
<path d="M95 0H149V100L120 90L100 60Z" fill="#c8ccc4"/>
<path d="M100 60L140 80L130 120L95 110Z" fill="#dcdedc"/>
<path d="M5 110C30 85 60 100 85 105L90 149H0Z" fill="#6a9040"/>
<path d="M90 115C110 105 140 110 149 125V149H85Z" fill="#3e6a3e"/>
<ellipse cx="70" cy="105" rx="8" ry="16" fill="#8a4a3a"/>
<path d="M60 125L80 120L85 149H55Z" fill="#2a3a2a"/>
</g></g></svg><div class="abs" style="left:9px;top:140px;width:57px;height:57px;border-radius:12px;background:#263a28"></div><svg class="abs" style="left:23px;top:154px" width="30" height="30" viewBox="0 0 30 30"><g fill="#f2f2f2"><rect x="10" y="3" width="9" height="14" rx="4.5"/><path d="M6.5 13.5C6.5 19 10 22 14.5 22C19 22 22.5 19 22.5 13.5H20.3C20.3 17.5 17.8 19.8 14.5 19.8C11.2 19.8 8.7 17.5 8.7 13.5Z"/><rect x="13.4" y="21" width="2.2" height="4"/><rect x="9.5" y="24.5" width="10" height="2.6" rx="1"/></g><path d="M3 28L27 3" stroke="#263a28" stroke-width="4.5"/><path d="M3.5 27.5L26.5 3.5" stroke="#f2f2f2" stroke-width="2.2"/></svg></div>
<div class="abs tile" style="left:2271px;top:1468px;width:251px;height:205px;background:#5d4a3f;border-radius:13px"><svg class="abs" style="left:0;top:0" width="251" height="205" viewBox="0 0 251 205">
<defs><clipPath id="c9"><circle cx="125" cy="103" r="74"/></clipPath><filter id="b9" x="-30%" y="-30%" width="160%" height="160%"><feGaussianBlur stdDeviation="3"/></filter></defs>
<g clip-path="url(#c9)"><g filter="url(#b9)">
<rect x="40" y="20" width="170" height="170" fill="#d0d0d4"/>
<path d="M60 140C70 110 90 100 100 120L110 190H50Z" fill="#7a7a6a"/>
<path d="M90 70C100 50 150 50 165 80C175 110 170 150 160 190H85C80 150 80 100 90 70Z" fill="#6a4a3a"/>
<ellipse cx="127" cy="110" rx="30" ry="38" fill="#c09888"/>
<path d="M95 190C100 150 150 150 160 190Z" fill="#4a3a2e"/>
<path d="M155 130C170 120 185 140 190 190H150Z" fill="#8a8a80"/>
</g></g>
<g filter="url(#b9)">
<path d="M40 35C45 15 90 15 130 20C160 15 190 30 205 55L210 75C190 80 160 60 120 55C90 52 55 60 40 35Z" fill="#de9a4c"/>
<path d="M120 20C130 8 160 10 165 30L150 45Z" fill="#e8a85a"/>
<path d="M120 38L165 40L200 55L190 70L150 55Z" fill="#74b8dc"/>
<circle cx="178" cy="52" r="10" fill="#8ac4e4"/>
</g>
</svg><div class="abs" style="left:9px;top:140px;width:57px;height:57px;border-radius:12px;background:#3a2c24"></div><svg class="abs" style="left:23px;top:154px" width="30" height="30" viewBox="0 0 30 30"><g fill="#f2f2f2"><rect x="10" y="3" width="9" height="14" rx="4.5"/><path d="M6.5 13.5C6.5 19 10 22 14.5 22C19 22 22.5 19 22.5 13.5H20.3C20.3 17.5 17.8 19.8 14.5 19.8C11.2 19.8 8.7 17.5 8.7 13.5Z"/><rect x="13.4" y="21" width="2.2" height="4"/><rect x="9.5" y="24.5" width="10" height="2.6" rx="1"/></g><path d="M3 28L27 3" stroke="#3a2c24" stroke-width="4.5"/><path d="M3.5 27.5L26.5 3.5" stroke="#f2f2f2" stroke-width="2.2"/></svg></div>
<div class="abs tile" style="left:2535px;top:1468px;width:251px;height:205px;background:#080c0e;border-radius:13px;overflow:hidden"><svg width="251" height="205" viewBox="0 0 251 205">
<defs><filter id="b10" x="-50%" y="-50%" width="200%" height="200%"><feGaussianBlur stdDeviation="3"/></filter></defs>
<rect width="251" height="205" fill="#080c0e"/>
<g filter="url(#b10)">
<ellipse cx="130" cy="115" rx="75" ry="70" fill="#0c1418"/>
<rect x="120" y="30" width="50" height="40" fill="#141c1e"/>
<rect x="150" y="40" width="6" height="25" fill="#3a4444"/>
<ellipse cx="93" cy="95" rx="14" ry="22" fill="#7a8c88"/>
<path d="M62 165C62 130 75 112 95 114C115 116 122 135 122 165Z" fill="#8aa4a2"/>
<ellipse cx="155" cy="88" rx="17" ry="20" fill="#56625e"/>
<path d="M122 165C125 125 140 108 165 112C185 118 195 140 195 165Z" fill="#1c2424"/>
<path d="M160 100L198 100L196 108L160 108Z" fill="#3a4444"/>
<rect x="62" y="160" width="95" height="10" fill="#1e4a66"/>
</g>
</svg><svg class="abs" style="left:24px;top:155px" width="30" height="30" viewBox="0 0 30 30"><g fill="#f2f2f2"><rect x="10" y="3" width="9" height="14" rx="4.5"/><path d="M6.5 13.5C6.5 19 10 22 14.5 22C19 22 22.5 19 22.5 13.5H20.3C20.3 17.5 17.8 19.8 14.5 19.8C11.2 19.8 8.7 17.5 8.7 13.5Z"/><rect x="13.4" y="21" width="2.2" height="4"/><rect x="9.5" y="24.5" width="10" height="2.6" rx="1"/></g><path d="M3 28L27 3" stroke="#080c0e" stroke-width="4.5"/><path d="M3.5 27.5L26.5 3.5" stroke="#f2f2f2" stroke-width="2.2"/></svg></div>
<!--/TILES-->
</body></html>
